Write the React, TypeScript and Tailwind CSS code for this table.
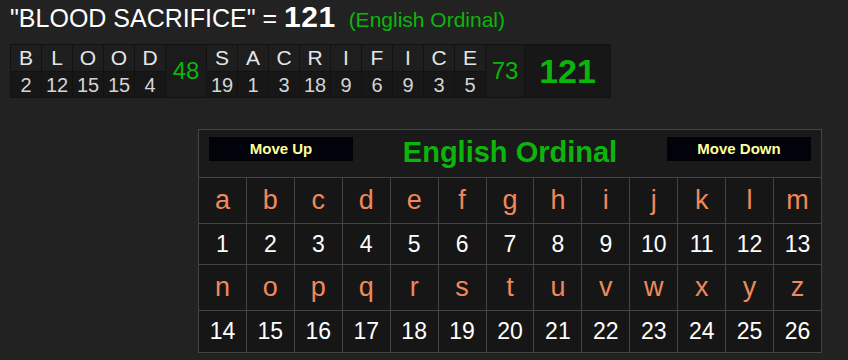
const WORDS: { letters: [string, number][]; total: number }[] = [
  {
    letters: [
      ["B", 2],
      ["L", 12],
      ["O", 15],
      ["O", 15],
      ["D", 4],
    ],
    total: 48,
  },
  {
    letters: [
      ["S", 19],
      ["A", 1],
      ["C", 3],
      ["R", 18],
      ["I", 9],
      ["F", 6],
      ["I", 9],
      ["C", 3],
      ["E", 5],
    ],
    total: 73,
  },
];

const ALPHABET = "abcdefghijklmnopqrstuvwxyz".split("");

function LetterCell({ letter, value }: { letter: string; value: number }) {
  return (
    <div className="flex flex-col gap-px w-[30px]">
      <div className="h-[26px] flex items-center justify-center bg-[#1e1e1e] text-[#e2e6ea] text-[21px]">
        {letter}
      </div>
      <div className="h-[25px] flex items-center justify-center bg-[#171717] text-[#d4d4d4] text-[20px]">
        {value}
      </div>
    </div>
  );
}

function Breakdown() {
  return (
    <div className="ml-[10px] inline-flex gap-px p-px bg-[#121212]">
      {WORDS.map((word, i) => (
        <div key={i} className="flex gap-px">
          {word.letters.map(([l, v], j) => (
            <LetterCell key={j} letter={l} value={v} />
          ))}
          <div
            className={
              i === 0
                ? "w-[40px] flex items-center justify-center bg-[#1b1b1b] text-[#0cb50c] text-[24px]"
                : "w-[38px] flex items-center justify-center bg-[#1b1b1b] text-[#0cb50c] text-[24px]"
            }
          >
            {word.total}
          </div>
        </div>
      ))}
      <div className="w-[85px] flex items-center justify-center bg-[#171717] text-[#0cb50c] text-[34px] font-bold">
        121
      </div>
    </div>
  );
}

function ChartButton({ label }: { label: string }) {
  return (
    <button className="w-[144px] h-[24px] flex items-center justify-center bg-[#02020a] text-[#ffff99] text-[15px] font-bold">
      {label}
    </button>
  );
}

function Chart() {
  const rows = [ALPHABET.slice(0, 13), ALPHABET.slice(13)];
  return (
    <div className="ml-[198px] mt-[31px] w-[624px] border border-[#444] bg-[#444] flex flex-col gap-px">
      <div className="h-[47px] bg-[#1a1a1a] flex items-start justify-between px-[10px] pt-[7px]">
        <ChartButton label="Move Up" />
        <div className="text-[29px] font-bold text-[#0cb50c] leading-[30px]">
          English Ordinal
        </div>
        <ChartButton label="Move Down" />
      </div>
      <div className="grid grid-cols-13 gap-px">
        {rows.map((row, r) => (
          <div key={r} className="contents">
            {row.map((ch) => (
              <div
                key={ch}
                className="h-[45px] flex items-center justify-center bg-[#161616] text-[#f0885a] text-[27px]"
              >
                {ch}
              </div>
            ))}
            {row.map((ch) => (
              <div
                key={ch + "n"}
                className={
                  r === 0
                    ? "h-[40px] flex items-center justify-center bg-[#161616] text-white text-[23px]"
                    : "h-[41px] flex items-center justify-center bg-[#161616] text-white text-[23px]"
                }
              >
                {ALPHABET.indexOf(ch) + 1}
              </div>
            ))}
          </div>
        ))}
      </div>
    </div>
  );
}

export default function App() {
  return (
    <div className="min-h-[360px] bg-[#222222] font-['Liberation_Sans',Arial,sans-serif] overflow-hidden">
      <div className="h-[44px] pl-[10px] flex items-baseline whitespace-pre">
        <span className="text-[25px] leading-[30px] text-white">{'"BLOOD SACRIFICE" = '}</span>
        <span className="text-[30px] leading-[34px] tracking-[0.5px] font-bold text-white">121</span>
        <span className="text-[21px] leading-[26px] text-[#0cb50c] ml-[13px]">(English Ordinal)</span>
      </div>
      <Breakdown />
      <Chart />
    </div>
  );
}
